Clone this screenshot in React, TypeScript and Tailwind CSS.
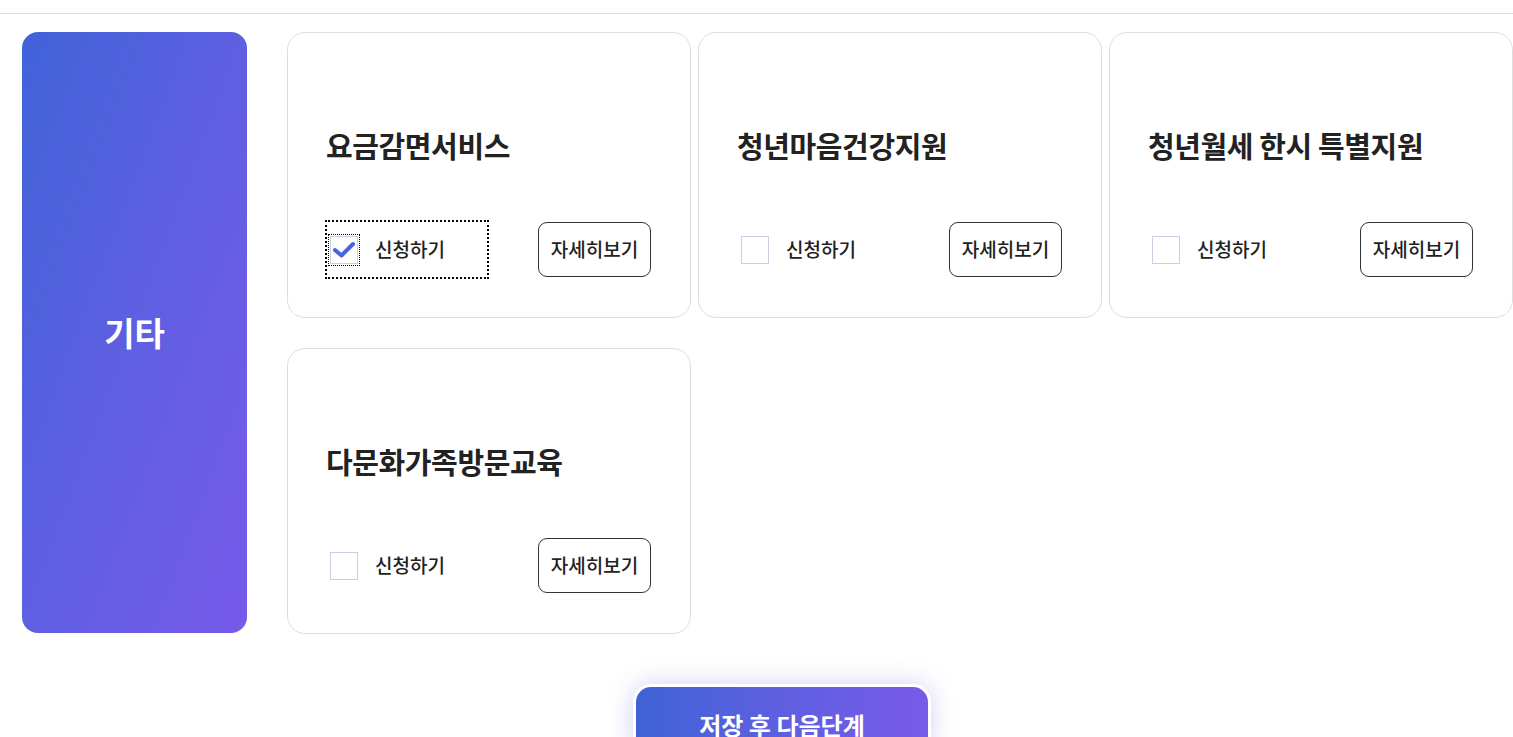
import React from "react";

const cards = [
  { title: "요금감면서비스", checked: true },
  { title: "청년마음건강지원", checked: false },
  { title: "청년월세 한시 특별지원", checked: false },
  { title: "다문화가족방문교육", checked: false },
];

function Card({ title, checked }: { title: string; checked: boolean }) {
  return (
    <div className="w-[404px] h-[286px] rounded-[18px] border border-[#dedede] bg-white flex flex-col pl-[38px] pr-[39px] pt-[94px] pb-[40px]">
      <h3 className="text-[29px] leading-[36px] font-bold text-[#222] tracking-[-0.4px] whitespace-nowrap">{title}</h3>
      <div className="mt-[59px] flex items-center justify-between h-[55px]">
        <label
          className={
            "flex items-center h-[57px] w-[162px] " +
            (checked ? "outline-2 outline-dotted outline-black outline-offset-[-1px]" : "")
          }
        >
          <span
            className={
              "ml-[4px] w-[28px] h-[28px] border border-[#c9d0e6] bg-white flex items-center justify-center " +
              (checked ? "outline outline-1 outline-dotted outline-black outline-offset-[1px]" : "")
            }
          >
            {checked && (
              <svg width="24" height="20" viewBox="0 0 24 20">
                <path d="M3 10 L9.5 15.5 L21 4" fill="none" stroke="#4a63dc" strokeWidth="4" strokeLinecap="round" strokeLinejoin="round" />
              </svg>
            )}
          </span>
          <span className="ml-[17px] text-[19px] font-medium text-[#222]">신청하기</span>
        </label>
        <button className="w-[113px] h-[55px] rounded-[9px] border border-[#333] bg-white text-[19px] font-medium text-[#222]">
          자세히보기
        </button>
      </div>
    </div>
  );
}

export default function App() {
  return (
    <div
      className="w-[1513px] h-[737px] overflow-hidden bg-white"
      style={{ fontFamily: '"Noto Sans CJK KR", "Noto Sans", sans-serif' }}
    >
      <div className="h-[14px] border-b border-[#dedede]" />
      <div className="flex pt-[18px] pl-[22px] gap-[40px]">
        <div className="w-[225px] h-[601px] shrink-0 rounded-[16px] bg-linear-to-br from-[#3f63d8] to-[#775aea] flex items-center justify-center">
          <span className="text-white text-[33px] font-bold">기타</span>
        </div>
        <div className="grid grid-cols-[404px_404px_404px] gap-x-[7px] gap-y-[30px]">
          {cards.map((c) => (
            <Card key={c.title} title={c.title} checked={c.checked} />
          ))}
        </div>
      </div>
      <div className="pl-[633px] mt-[50px]">
        <button className="w-[298px] h-[72px] rounded-[18px] border-[3px] border-white bg-linear-to-r from-[#3e63d7] to-[#785ae9] text-white text-[24px] font-bold shadow-[0_0_24px_rgba(110,95,235,0.3)] pt-[10px]">
          저장 후 다음단계
        </button>
      </div>
    </div>
  );
}
